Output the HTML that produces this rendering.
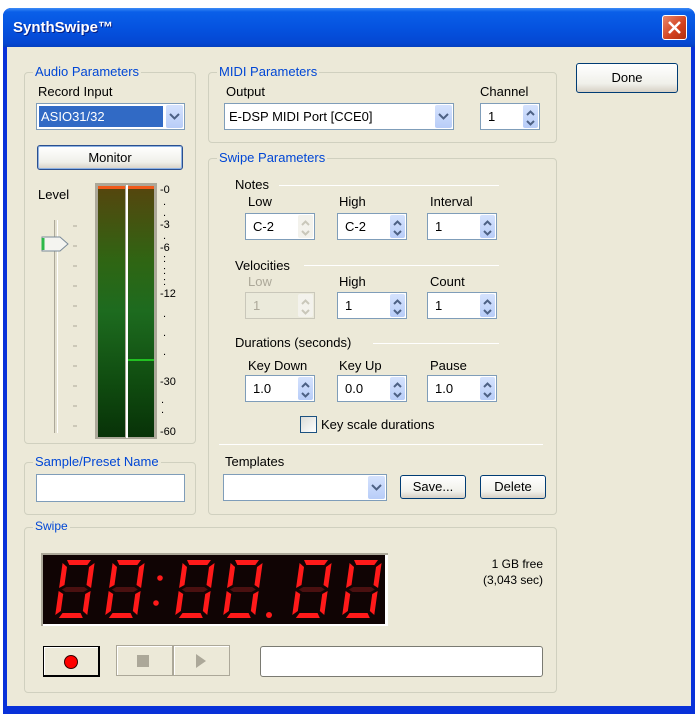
<!DOCTYPE html>
<html><head><meta charset="utf-8"><style>
*{box-sizing:border-box;margin:0;padding:0}
body{width:698px;height:715px;background:#fff;font-family:"Liberation Sans",sans-serif;font-size:13px;color:#000;position:relative;overflow:hidden}
.a{position:absolute}
.win{left:3px;top:8px;width:692px;height:706px;background:#0831d9;border-radius:8px 8px 0 0}
.title{left:3px;top:8px;width:692px;height:39px;border-radius:8px 8px 0 0;background:linear-gradient(#3d8bf6 0,#0a5fe8 10%,#0553e0 50%,#0547d2 90%,#0540c0 100%)}
.tt{left:13px;top:19px;color:#fff;font-weight:bold;font-size:15px;text-shadow:1px 1px #0a1e80}
.close{left:662px;top:15px;width:25px;height:25px;border:1px solid #fff;border-radius:3px;background:linear-gradient(135deg,#e8876b,#d2401d 60%,#b0300f)}
.body{left:7px;top:47px;width:684px;height:659px;background:#ece9d8}
.grp{border:1px solid #d0d0bf;border-radius:4px}
.gl{background:#ece9d8;color:#0046d5;padding:0 2px;font-size:13px}
.lbl{font-size:13px}
.box{background:#fff;border:1px solid #7f9db9}
.btn{border:1px solid #003c74;border-radius:3px;background:linear-gradient(#fff,#f0f0ea 70%,#d6d0c5);text-align:center;font-size:13px}
.arr{position:absolute;top:1px;right:1px;bottom:1px;width:17px;background:linear-gradient(#d5e2fd,#b8cdf8);border-radius:2px}
.arr svg{position:absolute;left:3px;top:50%;margin-top:-4px}
.sp{position:absolute;top:1px;right:1px;bottom:1px;width:15px;background:linear-gradient(#d5e2fd,#b8cdf8);border-radius:2px}
.sep{height:1px;background:#c8c5b5;border-bottom:1px solid #fff}
</style></head><body>
<div class="a win"></div>
<div class="a title"></div>
<div class="a tt">SynthSwipe™</div>
<div class="a close"><svg width="23" height="23"><path d="M6 6L17 17M17 6L6 17" stroke="#fff" stroke-width="2.5"/></svg></div>
<div class="a body"></div>

<!-- Audio Parameters -->
<div class="a grp" style="left:24px;top:72px;width:172px;height:372px"></div>
<div class="a gl" style="left:33px;top:64px">Audio Parameters</div>
<div class="a lbl" style="left:38px;top:84px">Record Input</div>
<div class="a box" style="left:36px;top:103px;width:149px;height:27px"><div class="a" style="left:2px;top:2px;width:124px;height:21px;background:#316ac5;color:#fff;padding:3px 2px">ASIO31/32</div><div class="arr"><svg width="11" height="8"><path d="M1 1L5.5 5.5L10 1" stroke="#4d6185" stroke-width="2" fill="none"/></svg></div></div>
<div class="a btn" style="left:37px;top:145px;width:146px;height:25px;line-height:23px;border-color:#2b4f8e;box-shadow:inset 0 0 0 1px #8db2e3">Monitor</div>
<div class="a lbl" style="left:38px;top:187px">Level</div>
<div class="a" style="left:54px;top:220px;width:4px;height:213px;border-left:1px solid #aca899;border-right:1px solid #fff;background:#e3e0d0"></div>
<svg class="a" style="left:40px;top:236px" width="32" height="16"><path d="M2 1H20L28 8L20 15H2Z" fill="#f4f4f0" stroke="#7a8a99"/><path d="M3 2V14" stroke="#2cb84a" stroke-width="3"/></svg>
<svg class="a" style="left:72px;top:220px" width="8" height="215"><g stroke="#aca899"><path d="M1 6H5M1 26H5M1 46H5M1 66H5M1 86H5M1 106H5M1 126H5M1 146H5M1 166H5M1 186H5M1 206H5"/></g></svg>
<div class="a" style="left:95px;top:183px;width:62px;height:256px;background:#aca899"></div>
<div class="a" style="left:98px;top:186px;width:27px;height:251px;background:linear-gradient(#56450e,#2f6513 30%,#1d6b1f 50%,#0f4a0f 80%,#083208)"></div>
<div class="a" style="left:128px;top:186px;width:26px;height:251px;background:linear-gradient(#56450e,#2f6513 30%,#1d6b1f 50%,#0f4a0f 80%,#083208)"></div>
<div class="a" style="left:126px;top:185px;width:2px;height:253px;background:#fff"></div>
<div class="a" style="left:98px;top:186px;width:27px;height:3px;background:#f05a1a"></div>
<div class="a" style="left:128px;top:186px;width:26px;height:3px;background:#f05a1a"></div>
<div class="a" style="left:128px;top:359px;width:26px;height:2px;background:#22c022"></div>
<div class="a" style="left:160px;top:185px;font-size:11px;line-height:11.5px">-0<br>&nbsp;.<br>&nbsp;.<br>-3<br>&nbsp;.<br>-6<br>&nbsp;:<br>&nbsp;:<br>&nbsp;:<br>-12</div>
<div class="a" style="left:160px;top:305px;font-size:11px;line-height:19px">&nbsp;.<br>&nbsp;.<br>&nbsp;.<br></div>
<div class="a" style="left:160px;top:376px;font-size:11px">-30</div>
<div class="a" style="left:161px;top:395px;font-size:11px;line-height:10px">.<br>.</div>
<div class="a" style="left:160px;top:426px;font-size:11px">-60</div>

<div class="a grp" style="left:24px;top:462px;width:172px;height:53px"></div>
<div class="a gl" style="left:33px;top:454px">Sample/Preset Name</div>
<div class="a box" style="left:36px;top:474px;width:149px;height:28px"></div>

<!-- MIDI -->
<div class="a grp" style="left:208px;top:72px;width:349px;height:71px"></div>
<div class="a gl" style="left:217px;top:64px">MIDI Parameters</div>
<div class="a lbl" style="left:226px;top:84px">Output</div>
<div class="a box" style="left:224px;top:103px;width:230px;height:27px;padding:5px 4px">E-DSP MIDI Port [CCE0]<div class="arr"><svg width="11" height="8"><path d="M1 1L5.5 5.5L10 1" stroke="#4d6185" stroke-width="2" fill="none"/></svg></div></div>
<div class="a lbl" style="left:480px;top:84px">Channel</div>
<div class="a box" style="left:480px;top:103px;width:60px;height:27px;padding:5px 7px">1<div class="sp"><svg width="13" height="22" style="position:absolute;left:1px;top:2px"><path d="M3 8L6.5 4.5L10 8M3 14L6.5 17.5L10 14" stroke="#4d6185" stroke-width="2" fill="none"/></svg></div></div>

<div class="a btn" style="left:576px;top:63px;width:102px;height:30px;line-height:28px">Done</div>

<!-- Swipe Parameters -->
<div class="a grp" style="left:208px;top:158px;width:349px;height:357px"></div>
<div class="a gl" style="left:217px;top:150px">Swipe Parameters</div>

<div class="a lbl" style="left:235px;top:177px">Notes</div><div class="a sep" style="left:279px;top:185px;width:220px"></div>
<div class="a lbl" style="left:248px;top:194px">Low</div>
<div class="a lbl" style="left:339px;top:194px">High</div>
<div class="a lbl" style="left:430px;top:194px">Interval</div>

<div class="a lbl" style="left:235px;top:258px">Velocities</div><div class="a sep" style="left:304px;top:265px;width:195px"></div>
<div class="a lbl" style="left:248px;top:274px;color:#aca899">Low</div>
<div class="a lbl" style="left:339px;top:274px">High</div>
<div class="a lbl" style="left:430px;top:274px">Count</div>

<div class="a lbl" style="left:235px;top:335px">Durations (seconds)</div><div class="a sep" style="left:373px;top:343px;width:126px"></div>
<div class="a lbl" style="left:248px;top:358px">Key Down</div>
<div class="a lbl" style="left:339px;top:358px">Key Up</div>
<div class="a lbl" style="left:430px;top:358px">Pause</div>

<div class="a box" style="left:245px;top:213px;width:70px;height:27px;padding:5px 7px">C-2<div class="sp" style="background:#f3f2ec"><svg width="13" height="22" style="position:absolute;left:1px;top:2px"><path d="M3 8L6.5 4.5L10 8M3 14L6.5 17.5L10 14" stroke="#c9c7ba" stroke-width="2" fill="none"/></svg></div></div>
<div class="a box" style="left:337px;top:213px;width:70px;height:27px;padding:5px 7px">C-2<div class="sp"><svg width="13" height="22" style="position:absolute;left:1px;top:2px"><path d="M3 8L6.5 4.5L10 8M3 14L6.5 17.5L10 14" stroke="#4d6185" stroke-width="2" fill="none"/></svg></div></div>
<div class="a box" style="left:427px;top:213px;width:70px;height:27px;padding:5px 7px">1<div class="sp"><svg width="13" height="22" style="position:absolute;left:1px;top:2px"><path d="M3 8L6.5 4.5L10 8M3 14L6.5 17.5L10 14" stroke="#4d6185" stroke-width="2" fill="none"/></svg></div></div>

<div class="a box" style="left:245px;top:292px;width:70px;height:27px;padding:5px 7px;background:#ebeadb;border-color:#c9c7ba;color:#aca899">1<div class="sp" style="background:#f3f2ec"><svg width="13" height="22" style="position:absolute;left:1px;top:2px"><path d="M3 8L6.5 4.5L10 8M3 14L6.5 17.5L10 14" stroke="#c9c7ba" stroke-width="2" fill="none"/></svg></div></div>
<div class="a box" style="left:337px;top:292px;width:70px;height:27px;padding:5px 7px">1<div class="sp"><svg width="13" height="22" style="position:absolute;left:1px;top:2px"><path d="M3 8L6.5 4.5L10 8M3 14L6.5 17.5L10 14" stroke="#4d6185" stroke-width="2" fill="none"/></svg></div></div>
<div class="a box" style="left:427px;top:292px;width:70px;height:27px;padding:5px 7px">1<div class="sp"><svg width="13" height="22" style="position:absolute;left:1px;top:2px"><path d="M3 8L6.5 4.5L10 8M3 14L6.5 17.5L10 14" stroke="#4d6185" stroke-width="2" fill="none"/></svg></div></div>

<div class="a box" style="left:245px;top:375px;width:70px;height:27px;padding:5px 7px">1.0<div class="sp"><svg width="13" height="22" style="position:absolute;left:1px;top:2px"><path d="M3 8L6.5 4.5L10 8M3 14L6.5 17.5L10 14" stroke="#4d6185" stroke-width="2" fill="none"/></svg></div></div>
<div class="a box" style="left:337px;top:375px;width:70px;height:27px;padding:5px 7px">0.0<div class="sp"><svg width="13" height="22" style="position:absolute;left:1px;top:2px"><path d="M3 8L6.5 4.5L10 8M3 14L6.5 17.5L10 14" stroke="#4d6185" stroke-width="2" fill="none"/></svg></div></div>
<div class="a box" style="left:427px;top:375px;width:70px;height:27px;padding:5px 7px">1.0<div class="sp"><svg width="13" height="22" style="position:absolute;left:1px;top:2px"><path d="M3 8L6.5 4.5L10 8M3 14L6.5 17.5L10 14" stroke="#4d6185" stroke-width="2" fill="none"/></svg></div></div>

<div class="a" style="left:300px;top:416px;width:17px;height:17px;border:1px solid #1c5180;background:linear-gradient(135deg,#dcdcd7,#fff)"></div>
<div class="a lbl" style="left:321px;top:417px">Key scale durations</div>
<div class="a sep" style="left:219px;top:444px;width:324px"></div>
<div class="a lbl" style="left:225px;top:454px">Templates</div>
<div class="a box" style="left:223px;top:474px;width:164px;height:27px"><div class="arr"><svg width="11" height="8"><path d="M1 1L5.5 5.5L10 1" stroke="#4d6185" stroke-width="2" fill="none"/></svg></div></div>
<div class="a btn" style="left:400px;top:475px;width:66px;height:24px;line-height:22px">Save...</div>
<div class="a btn" style="left:480px;top:475px;width:66px;height:24px;line-height:22px">Delete</div>

<!-- Swipe -->
<div class="a grp" style="left:24px;top:527px;width:533px;height:166px"></div>
<div class="a gl" style="left:33px;top:519px;font-size:12px">Swipe</div>
<div class="a" style="left:41px;top:553px;width:347px;height:73px;background:#fff;border-top:2px solid #aca899;border-left:2px solid #aca899"></div>
<div class="a" style="left:43px;top:555px;width:342px;height:69px;background:#100404"></div>
<svg class="a" style="left:43px;top:555px" width="342" height="69">
<defs><g id="d" transform="skewX(-8)">
<g fill="#ff1a1a">
<polygon points="4,0 28,0 25,5 7,5"/>
<polygon points="0,3 5,7 5,25 0,28"/>
<polygon points="32,3 32,28 27,25 27,7"/>
<polygon points="0,31 5,34 5,51 0,55"/>
<polygon points="32,31 32,55 27,51 27,34"/>
<polygon points="7,53 25,53 28,58 4,58"/>
</g>
<polygon fill="#4a1010" points="3,29.5 7,27 25,27 29,29.5 25,32 7,32"/>
</g></defs>
<use href="#d" x="20" y="5"/><use href="#d" x="70" y="5"/>
<circle cx="117" cy="23" r="2.8" fill="#ff1a1a"/><circle cx="113" cy="48" r="2.8" fill="#ff1a1a"/>
<use href="#d" x="140" y="5"/><use href="#d" x="188" y="5"/>
<circle cx="226" cy="60" r="3" fill="#ff1a1a"/>
<use href="#d" x="257" y="5"/><use href="#d" x="307" y="5"/>
</svg>
<div class="a" style="left:440px;top:556px;width:103px;text-align:right;font-size:12px;line-height:16px">1 GB free<br>(3,043 sec)</div>

<div class="a" style="left:43px;top:646px;width:57px;height:31px;background:#ece9d8;border:1px solid #000;border-right-width:2px;border-bottom-width:2px;box-shadow:inset 1px 1px #fff"><div class="a" style="left:20px;top:8px;width:14px;height:14px;border-radius:50%;background:#f00;border:1px solid #300"></div></div>
<div class="a" style="left:116px;top:645px;width:57px;height:31px;background:#ece9d8;border:1px solid #aca899;box-shadow:inset 1px 1px #fff"><div class="a" style="left:20px;top:9px;width:12px;height:12px;background:#aca899"></div></div>
<div class="a" style="left:173px;top:645px;width:57px;height:31px;background:#ece9d8;border:1px solid #aca899;box-shadow:inset 1px 1px #fff"><svg class="a" style="left:20px;top:8px" width="14" height="14"><path d="M2 0L12 7L2 14Z" fill="#aca899"/></svg></div>
<div class="a" style="left:260px;top:646px;width:283px;height:31px;background:#fff;border:1px solid #7a7a72;border-radius:3px"></div>
</body></html>
